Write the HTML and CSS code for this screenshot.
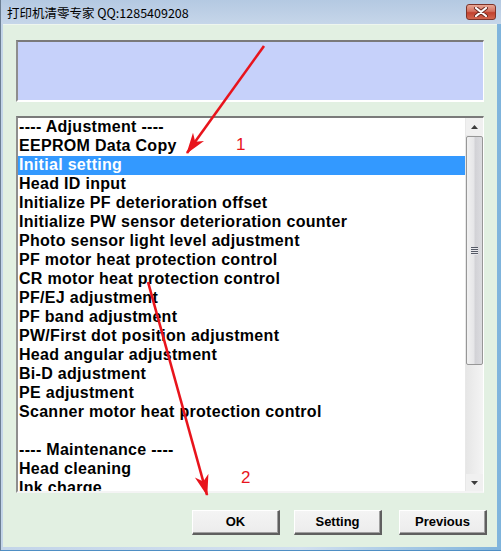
FILE: index.html
```html
<!DOCTYPE html>
<html>
<head>
<meta charset="utf-8">
<link rel="stylesheet" href="styles.css">
</head>
<body>
<div class="window">
  <div class="titlebar">
    <span class="title">打印机清零专家 QQ:1285409208</span>
    <div class="close">
      <svg width="14" height="10" viewBox="0 0 14 10">
        <path d="M2 1 L12 9 M12 1 L2 9" stroke="#6a2a22" stroke-width="4" stroke-linecap="round"/>
        <path d="M2 1 L12 9 M12 1 L2 9" stroke="#ffffff" stroke-width="2.2" stroke-linecap="round"/>
      </svg>
    </div>
  </div>
  <div class="client">
    <div class="panel"></div>
    <div class="listbox">
      <ul class="items">
        <li>---- Adjustment ----</li>
        <li>EEPROM Data Copy</li>
        <li class="selected">Initial setting</li>
        <li>Head ID input</li>
        <li>Initialize PF deterioration offset</li>
        <li>Initialize PW sensor deterioration counter</li>
        <li>Photo sensor light level adjustment</li>
        <li>PF motor heat protection control</li>
        <li>CR motor heat protection control</li>
        <li>PF/EJ adjustment</li>
        <li>PF band adjustment</li>
        <li>PW/First dot position adjustment</li>
        <li>Head angular adjustment</li>
        <li>Bi-D adjustment</li>
        <li>PE adjustment</li>
        <li>Scanner motor heat protection control</li>
        <li>&nbsp;</li>
        <li>---- Maintenance ----</li>
        <li>Head cleaning</li>
        <li class="last">Ink charge</li>
      </ul>
      <div class="scrollbar">
        <div class="sb-btn">
          <svg width="7" height="4" viewBox="0 0 7 4"><path d="M0 4 L3.5 0 L7 4 Z" fill="#3c3c3c"/></svg>
        </div>
        <div class="sb-track">
          <div class="thumb">
            <div class="grip"></div>
          </div>
        </div>
        <div class="sb-btn">
          <svg width="7" height="4" viewBox="0 0 7 4"><path d="M0 0 L7 0 L3.5 4 Z" fill="#3c3c3c"/></svg>
        </div>
      </div>
    </div>
    <div class="buttons">
      <button class="btn btn-ok">OK</button>
      <button class="btn btn-setting">Setting</button>
      <button class="btn btn-prev">Previous</button>
    </div>
  </div>
  <svg class="annot" width="501" height="551" viewBox="0 0 501 551">
    <defs>
      <marker id="head" markerUnits="userSpaceOnUse" markerWidth="24" markerHeight="16" refX="20" refY="7" orient="auto">
        <path d="M0 0 L21 7 L0 14 L6 7 Z" fill="#e8141c"/>
      </marker>
    </defs>
    <line x1="263" y1="46" x2="186" y2="153" stroke="#e8141c" stroke-width="2.6" marker-end="url(#head)"/>
    <line x1="147" y1="282" x2="206" y2="495" stroke="#e8141c" stroke-width="2.6" marker-end="url(#head)"/>
    <text x="235" y="150" class="num">1</text>
    <text x="240" y="483" class="num">2</text>
  </svg>
</div>
</body>
</html>
```

FILE: styles.css
```css
html, body {
  margin: 0;
  padding: 0;
  background: #ffffff;
}

.window {
  position: relative;
  width: 501px;
  height: 551px;
  box-sizing: border-box;
  display: flex;
  flex-direction: column;
  background: linear-gradient(to right, #c3d5e9, #d2e0ef 60%, #7fb4dc);
  border-left: 1px solid #6c7f94;
  border-bottom: 1px solid #4f8fc4;
  overflow: hidden;
}

.titlebar {
  height: 24px;
  flex: none;
  display: flex;
  align-items: center;
  justify-content: space-between;
  padding: 2px 5px 0 6px;
  box-sizing: border-box;
  background: linear-gradient(to bottom, #b4c9e2, #c6d6e9);
}

.title {
  font-family: "Noto Sans CJK SC", "Noto Sans", sans-serif;
  font-size: 12.5px;
  color: #000000;
  line-height: 16px;
}

.close {
  width: 30px;
  height: 16px;
  margin-top: -2px;
  box-sizing: border-box;
  border: 1px solid #7d3329;
  border-radius: 3px;
  background: linear-gradient(to bottom, #e8a796, #d4715f 45%, #c2412e 55%, #d2664f);
  display: flex;
  align-items: center;
  justify-content: center;
}

.client {
  flex: 1;
  margin: 0 4px 3px 2px;
  padding: 15px 13px 0 13px;
  background: #e2f0e2;
  border-top: 1px solid #eef6ee;
  display: flex;
  flex-direction: column;
}

.panel {
  height: 62px;
  box-sizing: border-box;
  background: #c6d1fa;
  border-style: solid;
  border-width: 2px 1px 2px 2px;
  border-color: #7a7a7a #ffffff #ffffff #8e8e8e;
}

.listbox {
  margin-top: 14px;
  height: 377px;
  box-sizing: border-box;
  background: #ffffff;
  border-style: solid;
  border-width: 2px 1px 2px 2px;
  border-color: #7a7a7a #ffffff #f4f4f4 #8e8e8e;
  display: flex;
  overflow: hidden;
}

.items {
  list-style: none;
  margin: 0;
  padding: 0;
  flex: 1;
  overflow: hidden;
  font-family: "Liberation Sans", Arial, sans-serif;
  font-weight: bold;
  font-size: 16px;
  letter-spacing: 0.3px;
  line-height: 17px;
  color: #000000;
}

.items li {
  height: 19px;
  padding-left: 1px;
  white-space: nowrap;
}

.items li.last {
  height: 16px;
  overflow: visible;
}

.items li.selected {
  background: #3399ff;
  color: #ffffff;
}

.scrollbar {
  width: 17px;
  flex: none;
  display: flex;
  flex-direction: column;
  background: #f0f0f0;
  border-left: 1px solid #e8e8e8;
}

.sb-btn {
  height: 17px;
  flex: none;
  display: flex;
  align-items: center;
  justify-content: center;
}

.sb-track {
  flex: 1;
  display: flex;
  flex-direction: column;
  background: linear-gradient(to right, #e6e6e6, #f4f4f4);
}

.thumb {
  margin: 1px 0 0 0;
  height: 229px;
  box-sizing: border-box;
  border: 1px solid #979797;
  border-radius: 2px;
  background: linear-gradient(to right, #f1f1f1, #e6e6e8 45%, #d2d2d6 55%, #dcdce0);
  display: flex;
  align-items: center;
  justify-content: center;
}

.grip {
  width: 7px;
  height: 8px;
  background: repeating-linear-gradient(to bottom, #555a66 0, #555a66 1px, #e8e8ec 1px, #e8e8ec 2px);
}

.buttons {
  margin-top: 17px;
  margin-right: -3px;
  display: flex;
  justify-content: flex-end;
}

.btn {
  width: 88px;
  height: 25px;
  box-sizing: border-box;
  font-family: "Liberation Sans", Arial, sans-serif;
  font-weight: bold;
  font-size: 13px;
  color: #000000;
  background: linear-gradient(to bottom, #f4f4f4, #ececec);
  border-style: solid;
  border-width: 1px 2px 2px 1px;
  border-color: #ffffff #5f5f5f #5f5f5f #ffffff;
  box-shadow: inset -1px -1px 0 #a0a0a0;
  padding: 0 0 1px 0;
}

.btn-setting {
  margin-left: 14px;
}

.btn-prev {
  margin-left: 17px;
}

.annot {
  position: absolute;
  left: 0;
  top: 0;
  pointer-events: none;
}

.num {
  font-family: "Liberation Sans", Arial, sans-serif;
  font-size: 17px;
  fill: #e8141c;
}
```
